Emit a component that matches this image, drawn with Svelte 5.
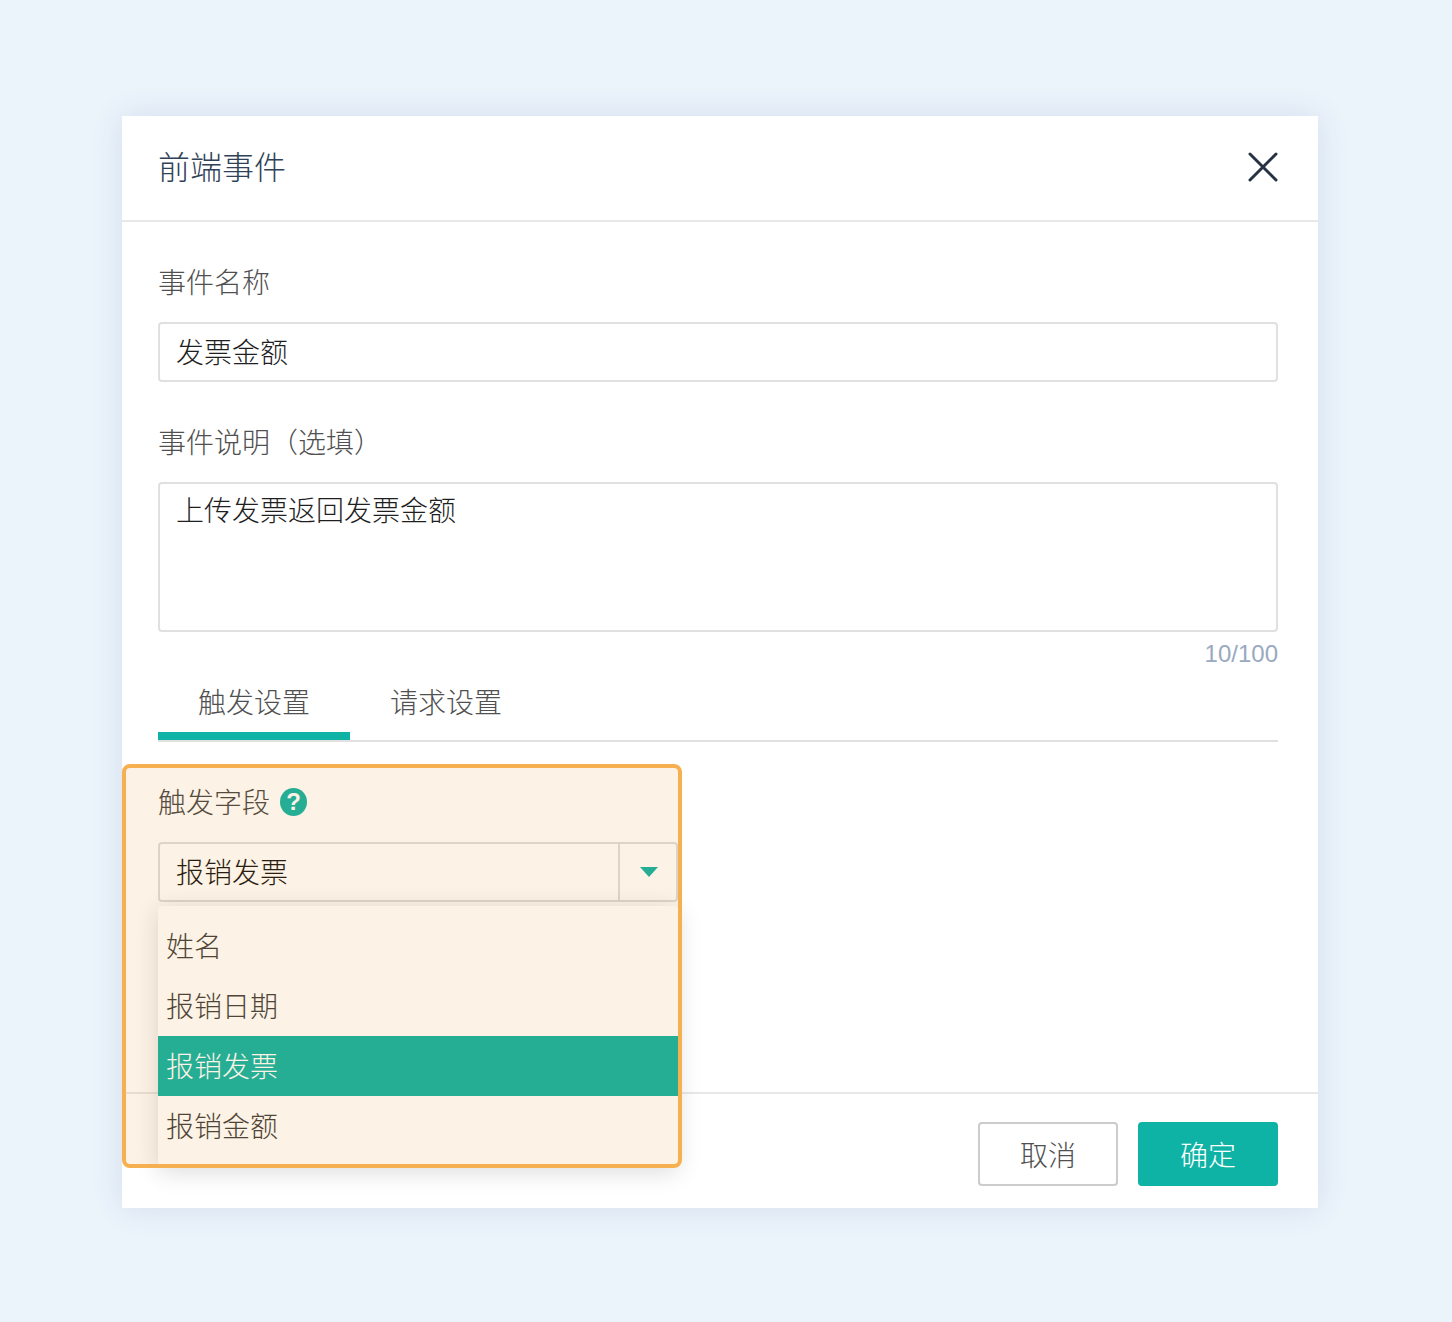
<script>
	const options = ['姓名', '报销日期', '报销发票', '报销金额'];
	let selected = $state('报销发票');
	let tab = $state(0);
</script>

<div class="page">
	<div class="dialog">
		<header class="head">
			<h1>前端事件</h1>
			<button class="close" aria-label="关闭">
				<svg width="32" height="32" viewBox="0 0 32 32">
					<path d="M3 3 L29 29 M29 3 L3 29" stroke="#263344" stroke-width="3" stroke-linecap="round" fill="none" />
				</svg>
			</button>
		</header>

		<div class="body">
			<div class="label">事件名称</div>
			<div class="input">发票金额</div>

			<div class="label second">事件说明（选填）</div>
			<div class="textarea">上传发票返回发票金额</div>
			<div class="count">10/100</div>

			<div class="tabs">
				<button class="tab" class:active={tab === 0} onclick={() => (tab = 0)}>触发设置</button>
				<button class="tab" class:active={tab === 1} onclick={() => (tab = 1)}>请求设置</button>
			</div>

			<div class="field">
				<div class="label with-help">
					触发字段
					<span class="help">?</span>
				</div>
				<div class="select">
					<span class="value">{selected}</span>
					<span class="arrow"><i></i></span>
					<ul class="menu">
						{#each options as option (option)}
							<li class:current={option === selected}>{option}</li>
						{/each}
					</ul>
				</div>
			</div>
		</div>

		<footer class="foot">
			<button class="btn">取消</button>
			<button class="btn primary">确定</button>
		</footer>

		<div class="highlight"></div>
	</div>
</div>

<style>
	:global(body) {
		background: #ebf3fb;
	}

	.page {
		padding: 116px 134px 114px 122px;
		font-family: 'Noto Sans CJK SC', sans-serif;
		font-weight: 300;
	}

	.dialog {
		position: relative;
		display: flex;
		flex-direction: column;
		height: 1092px;
		background: #fff;
		box-shadow: 0 0 30px rgba(60, 90, 130, 0.12);
	}

	.head {
		display: flex;
		align-items: center;
		justify-content: space-between;
		box-sizing: content-box;
		height: 102px;
		padding: 0 39px 2px 36px;
		border-bottom: 2px solid #e8e8e8;
	}

	h1 {
		margin: 0 0 4px;
		font-size: 32px;
		font-weight: 300;
		line-height: 44px;
		color: #2f4257;
	}

	.close {
		display: flex;
		padding: 0;
		border: none;
		background: none;
	}

	.body {
		flex: 1;
		min-height: 0;
		padding: 40px 40px 0 36px;
	}

	.label {
		height: 40px;
		font-size: 28px;
		line-height: 38px;
		color: #505050;
	}

	.label.second {
		margin-top: 40px;
	}

	.input,
	.textarea {
		box-sizing: border-box;
		margin-top: 20px;
		padding: 0 16px;
		border: 2px solid #e0e0e0;
		border-radius: 4px;
		font-size: 28px;
		color: #1f1f1f;
	}

	.input {
		height: 60px;
		line-height: 54px;
	}

	.textarea {
		height: 150px;
		line-height: 50px;
	}

	.count {
		margin-top: 6px;
		font-family: 'Liberation Sans', sans-serif;
		font-weight: 400;
		font-size: 24px;
		line-height: 32px;
		text-align: right;
		color: #99a9bf;
	}

	.tabs {
		display: flex;
		height: 70px;
		border-bottom: 2px solid #e0e0e0;
		box-sizing: content-box;
	}

	.tab {
		width: 192px;
		height: 70px;
		padding: 0;
		border: none;
		border-bottom: 8px solid transparent;
		background: none;
		font: inherit;
		font-size: 28px;
		color: #505050;
	}

	.tab.active {
		border-bottom-color: #0fb3a6;
	}

	.field {
		width: 520px;
		margin-top: 40px;
	}

	.with-help {
		display: flex;
		align-items: flex-start;
		gap: 10px;
		color: #444;
	}

	.help {
		display: flex;
		align-items: center;
		justify-content: center;
		width: 27px;
		height: 28px;
		margin-top: 6px;
		border-radius: 50%;
		background: #0fb3a6;
		font-family: 'Liberation Sans', sans-serif;
		font-size: 24px;
		font-weight: 700;
		color: #fff;
	}

	.select {
		position: relative;
		display: flex;
		box-sizing: border-box;
		height: 60px;
		margin-top: 20px;
		border: 2px solid #ddd;
		border-radius: 4px;
	}

	.value {
		flex: 1;
		padding-left: 16px;
		font-size: 28px;
		line-height: 54px;
		color: #111;
	}

	.arrow {
		display: flex;
		align-items: center;
		justify-content: center;
		box-sizing: border-box;
		width: 58px;
		padding-left: 2px;
		border-left: 2px solid #ddd;
	}

	.arrow i {
		width: 0;
		height: 0;
		border-top: 10px solid #0fb3a6;
		border-left: 9px solid transparent;
		border-right: 9px solid transparent;
	}

	.menu {
		position: absolute;
		top: 62px;
		left: -2px;
		right: -2px;
		height: 262px;
		box-sizing: border-box;
		margin: 0;
		padding: 10px 0;
		list-style: none;
		background: #fff;
		border-radius: 4px;
		box-shadow: 0 4px 24px rgba(0, 0, 0, 0.14);
	}

	.menu li {
		height: 60px;
		padding-left: 8px;
		font-size: 28px;
		line-height: 58px;
		color: #3c3c3c;
	}

	.menu li.current {
		background: #0fb3a6;
		color: #fff;
	}

	.foot {
		display: flex;
		justify-content: flex-end;
		gap: 20px;
		padding: 28px 40px 22px;
		border-top: 2px solid #e8e8e8;
	}

	.btn {
		box-sizing: border-box;
		width: 140px;
		height: 64px;
		padding: 0;
		border: 2px solid #ccc;
		border-radius: 4px;
		background: #fff;
		font: inherit;
		font-size: 28px;
		color: #505050;
	}

	.btn.primary {
		border-color: #0fb3a6;
		background: #0fb3a6;
		color: #fff;
	}

	.highlight {
		position: absolute;
		left: 0;
		top: 648px;
		box-sizing: border-box;
		width: 560px;
		height: 404px;
		border: 4px solid #f6b04f;
		border-radius: 8px;
		background: rgba(225, 135, 15, 0.11);
		pointer-events: none;
	}
</style>
